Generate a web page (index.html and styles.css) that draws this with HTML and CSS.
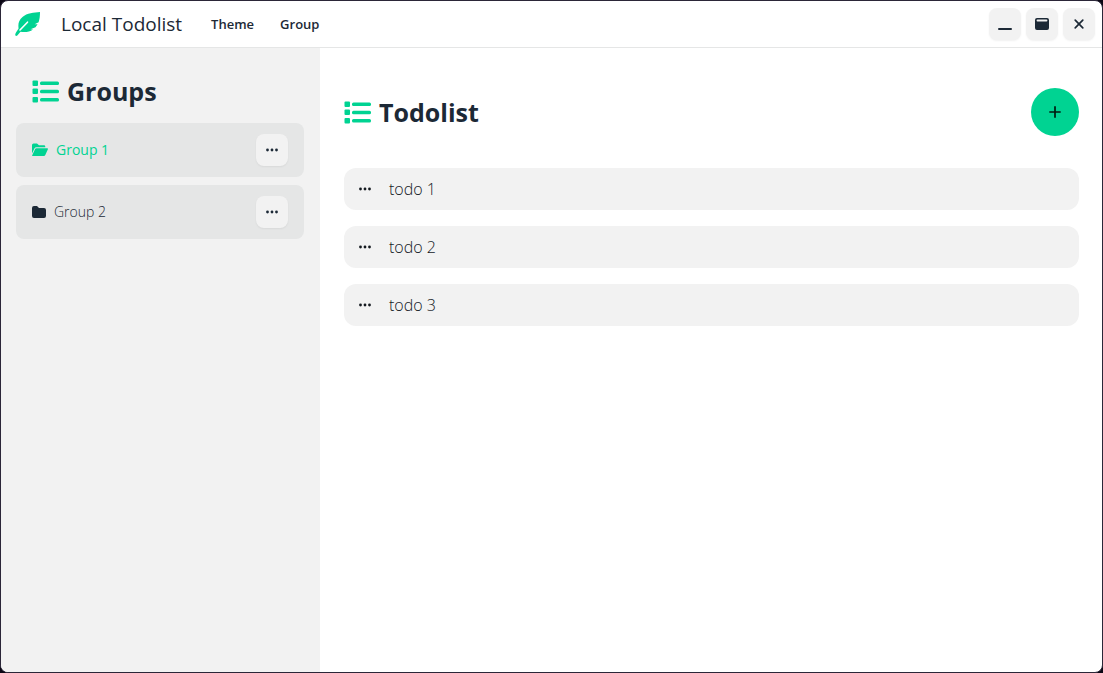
FILE: index.html
```html
<!DOCTYPE html>
<html lang="en">
<head>
<meta charset="utf-8">
<title>Local Todolist</title>
<link rel="stylesheet" href="styles.css">
</head>
<body>
<svg class="sprite" aria-hidden="true">
  <symbol id="list" viewBox="0 0 27 24">
    <rect x="0.500" y="1.500" width="5.500" height="5.500" rx="1"/><rect x="0.500" y="9.500" width="5.500" height="5.500" rx="1"/><rect x="0.500" y="18" width="5.500" height="5.500" rx="1"/>
    <rect x="8" y="2.500" width="19" height="3.500" rx="1.500"/><rect x="8" y="10.700" width="19" height="3.500" rx="1.500"/><rect x="8" y="19" width="19" height="3.500" rx="1.500"/>
  </symbol>
  <symbol id="dots" viewBox="0 0 12 12">
    <circle cx="1.500" cy="6" r="1.400"/><circle cx="6" cy="6" r="1.400"/><circle cx="10.500" cy="6" r="1.400"/>
  </symbol>
</svg>
<div class="window">
  <header class="titlebar">
    <svg class="logo" viewBox="0 0 26 26" aria-hidden="true">
      <path d="M25 1C19 1.500 12 2 7.500 6C3.500 9.500 3 13 3.600 17.500L1 21.500Q-.4 24 .7 24.800Q2 25.400 3.400 23.200L5.500 20.700C10 21.500 14.500 21 18 18.500L15.500 18.300L20.500 16.200L22.600 13.300L19.600 13.200L23.600 11.200C24.700 8 25 5 25 1Z" fill="currentColor"/>
      <path d="M5 19L12.500 11.200" fill="none" stroke="#fff" stroke-width="1.600" stroke-linecap="round"/>
    </svg>
    <span class="app-name">Local Todolist</span>
    <nav class="menu">
      <button type="button" class="menu-item">Theme</button>
      <button type="button" class="menu-item">Group</button>
    </nav>
    <div class="controls">
      <button type="button" class="square" aria-label="Minimize"><svg width="14" height="14" viewBox="0 0 14 14"><rect y="11" width="14" height="2" rx="1"/></svg></button>
      <button type="button" class="square" aria-label="Maximize"><svg width="14" height="14" viewBox="0 0 14 14"><path fill-rule="evenodd" d="M2 1H12Q14 1 14 3V11Q14 13 12 13H2Q0 13 0 11V3Q0 1 2 1ZM2.500 2.600Q1.600 2.600 1.600 3.600T2.500 4.600H11.500Q12.400 4.600 12.400 3.600T11.500 2.600Z"/></svg></button>
      <button type="button" class="square" aria-label="Close"><svg width="14" height="14" viewBox="0 0 14 14"><path d="M3.200 3.200L10.800 10.800M10.800 3.200L3.200 10.800" fill="none" stroke="currentColor" stroke-width="1.700" stroke-linecap="round"/></svg></button>
    </div>
  </header>
  <div class="content">
    <aside class="sidebar">
      <h1 class="heading groups-heading"><svg class="list-icon"><use href="#list"/></svg>Groups</h1>
      <ul class="groups">
        <li class="group active">
          <svg width="16" height="14" viewBox="0 0 16 14" aria-hidden="true"><path d="M0 10.500V2Q0 .5 1.500 .5H5L7 2.300H12Q13.300 2.300 13.300 3.700V4.300H4.500Q3 4.300 2.400 5.600ZM0 12.800L3 6.200Q3.400 5.300 4.500 5.300H15.300Q16.300 5.300 15.900 6.200L13.300 12Q12.900 13 11.800 13H.6Z"/></svg>
          <span class="group-name">Group 1</span>
          <button type="button" class="square" aria-label="Group 1 options"><svg class="dots"><use href="#dots"/></svg></button>
        </li>
        <li class="group">
          <svg width="14" height="14" viewBox="0 0 14 14" aria-hidden="true"><path d="M2 1H5L7 3H12Q14 3 14 5V11Q14 13 12 13H2Q0 13 0 11V3Q0 1 2 1Z"/></svg>
          <span class="group-name">Group 2</span>
          <button type="button" class="square" aria-label="Group 2 options"><svg class="dots"><use href="#dots"/></svg></button>
        </li>
      </ul>
    </aside>
    <main class="main">
      <div class="main-head">
        <h2 class="heading"><svg class="list-icon"><use href="#list"/></svg>Todolist</h2>
        <button type="button" class="add" aria-label="Add todo"><svg width="14" height="14" viewBox="0 0 14 14"><path d="M7 1.300V12.700M1.300 7H12.700" fill="none" stroke="currentColor" stroke-width="1.700"/></svg></button>
      </div>
      <ul class="todos">
        <li class="todo"><button type="button" class="todo-menu" aria-label="todo 1 options"><svg class="dots"><use href="#dots"/></svg></button><span>todo 1</span></li>
        <li class="todo"><button type="button" class="todo-menu" aria-label="todo 2 options"><svg class="dots"><use href="#dots"/></svg></button><span>todo 2</span></li>
        <li class="todo"><button type="button" class="todo-menu" aria-label="todo 3 options"><svg class="dots"><use href="#dots"/></svg></button><span>todo 3</span></li>
      </ul>
    </main>
  </div>
</div>
</body>
</html>
```
FILE: styles.css
```css
* { box-sizing: border-box; }
html { background: #0b0714; }
body {
  margin: 0;
  color: #1c2936;
  font: 14px/20px "Segoe UI", "Open Sans", "Noto Sans", sans-serif;
}
button { padding: 0; border: 0; background: none; color: inherit; font: inherit; }
ul { margin: 0; padding: 0; list-style: none; }
svg { display: block; flex: none; fill: currentColor; }
.sprite { position: absolute; width: 0; height: 0; }
.window {
  display: flex;
  flex-direction: column;
  min-height: 100vh;
  border: 1px solid #2b2638;
  border-radius: 8px;
  overflow: hidden;
  background: #fff;
}
.titlebar {
  display: flex;
  align-items: center;
  height: 47px;
  padding: 0 7px 0 14px;
  border-bottom: 1px solid #e5e6e6;
}
.logo { width: 26px; height: 26px; color: #00d392; }
.app-name { margin-left: 20px; font-size: 19px; line-height: 28px; font-weight: 500; }
.menu { display: flex; gap: 26px; margin-left: 29px; font-size: 13px; font-weight: 600; }
.controls { display: flex; gap: 5px; margin-left: auto; }
.square {
  display: flex;
  align-items: center;
  justify-content: center;
  width: 32px;
  height: 32px;
  border-radius: 8px;
  background: #f2f2f2;
  color: #1c2936;
  box-shadow: 0 1px 2px rgba(0, 0, 0, .06);
}
.content { display: flex; flex: 1; }
.sidebar { flex: none; width: 319px; padding: 23px 16px 16px 15px; background: #f2f2f2; }
.heading {
  display: flex;
  align-items: center;
  gap: 8px;
  margin: 0;
  font-size: 25px;
  line-height: 40px;
  font-weight: 700;
}
.groups-heading { padding-left: 16px; }
.list-icon { width: 27px; height: 24px; color: #00d392; }
.groups { display: grid; gap: 8px; margin-top: 12px; }
.group {
  display: flex;
  align-items: center;
  gap: 8px;
  height: 54px;
  padding: 0 16px;
  border-radius: 8px;
  background: #e5e6e6;
  font-weight: 300;
}
.active { color: #00d392; font-weight: 400; }
.group-name { flex: 1; }
.dots { width: 12px; height: 12px; }
.main { flex: 1; min-width: 0; padding: 40px 23px 24px 24px; }
.main-head { display: flex; align-items: center; justify-content: space-between; }
.add {
  display: flex;
  align-items: center;
  justify-content: center;
  width: 48px;
  height: 48px;
  border-radius: 50%;
  background: #00d392;
  color: #001a10;
}
.todos { display: grid; gap: 16px; margin-top: 32px; }
.todo {
  display: flex;
  align-items: center;
  gap: 18px;
  height: 42px;
  padding: 0 15px;
  border-radius: 12px;
  background: #f2f2f2;
  color: #14191f;
  font-size: 16px;
  line-height: 24px;
  font-weight: 300;
}
```
